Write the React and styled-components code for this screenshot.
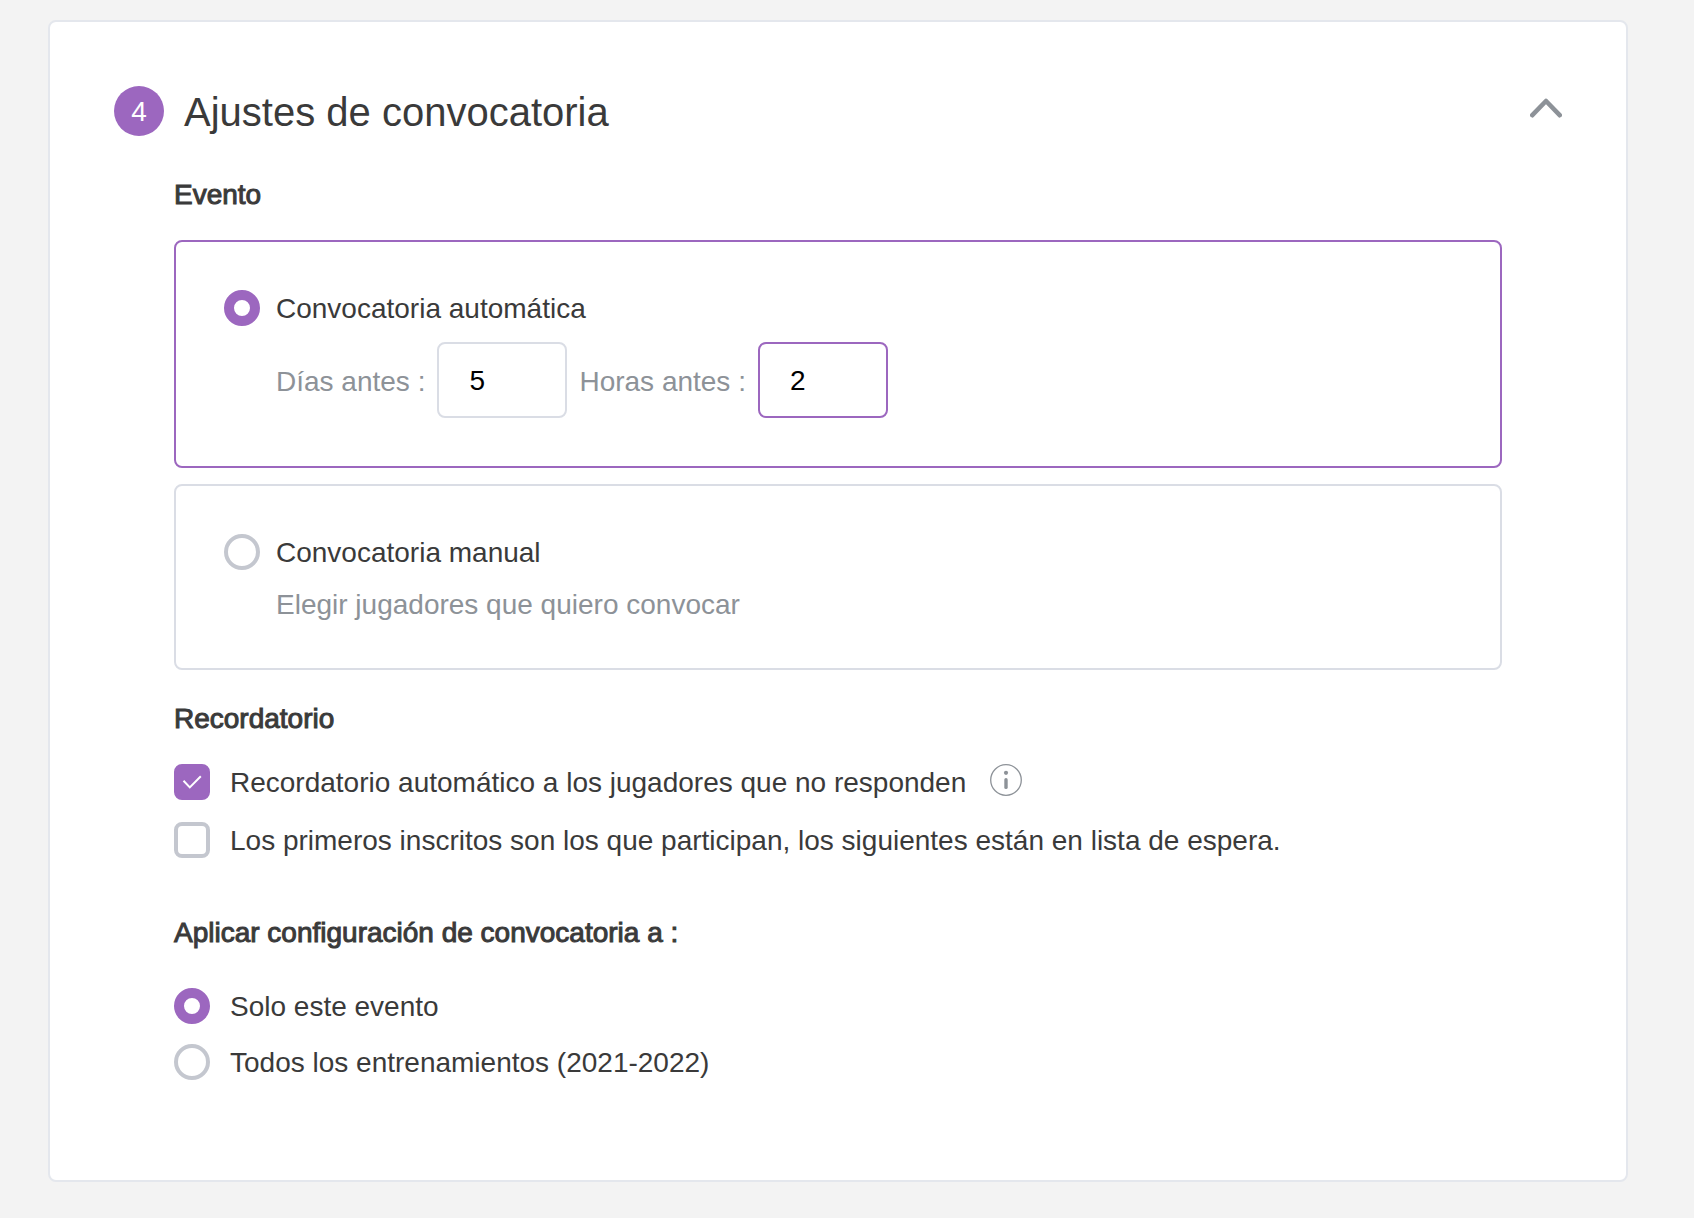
import React, { useState } from 'react';
import styled, { createGlobalStyle } from 'styled-components';

const GlobalStyle = createGlobalStyle`
  * {
    box-sizing: border-box;
  }

  body {
    margin: 0;
    background: #f3f3f3;
    color: #3a3a3a;
    font-family: 'Liberation Sans', Arial, sans-serif;
    font-size: 28px;
    line-height: 34px;
  }
`;

const Page = styled.main`
  padding: 20px 66px 36px 48px;
`;

const Card = styled.section`
  padding: 64px 64px 100px;
  background: #fff;
  border: 2px solid #e4e7ed;
  border-radius: 8px;
`;

const Header = styled.header`
  display: flex;
  align-items: center;
  gap: 20px;
`;

const StepNumber = styled.span`
  display: flex;
  align-items: center;
  justify-content: center;
  flex: none;
  width: 50px;
  height: 50px;
  padding-top: 2px;
  border-radius: 50%;
  background: #9c67bf;
  color: #fff;
`;

const Title = styled.h2`
  flex: 1;
  margin: 0;
  padding-top: 2px;
  font-size: 40px;
  line-height: 48px;
  font-weight: 400;
`;

const CollapseButton = styled.button`
  display: flex;
  padding: 0;
  border: none;
  background: none;
  color: #8d9298;
  cursor: pointer;
`;

const Content = styled.div`
  padding: 40px 60px 0;
`;

const Group = styled.fieldset`
  min-width: 0;
  margin: 0 0 ${props => props.$after || 0}px;
  padding: 0;
  border: none;
`;

const GroupTitle = styled.legend`
  padding: 2px 0 0;
  margin-bottom: ${props => props.$gap}px;
  -webkit-text-stroke: 1px currentColor;
`;

const Stack = styled.div`
  display: flex;
  flex-direction: column;
  gap: ${props => props.$gap}px;
`;

const OptionBox = styled.div`
  padding: 48px;
  border: 2px solid ${props => (props.$selected ? '#9c67bf' : '#dadde5')};
  border-radius: 8px;
`;

const Choice = styled.label`
  display: flex;
  align-items: center;
  gap: ${props => props.$gap || 20}px;
  cursor: pointer;
`;

const ChoiceText = styled.span`
  padding-top: 2px;
`;

const Radio = styled.input.attrs({ type: 'radio' })`
  appearance: none;
  flex: none;
  width: 36px;
  height: 36px;
  margin: 0;
  border: 4px solid #c4c7cf;
  border-radius: 50%;
  background: #fff;

  &:checked {
    border: 10px solid #9c67bf;
  }
`;

const CheckWrapper = styled.span`
  display: grid;
  flex: none;

  > * {
    grid-area: 1 / 1;
  }

  svg {
    pointer-events: none;
  }
`;

const Checkbox = styled.input.attrs({ type: 'checkbox' })`
  appearance: none;
  width: 36px;
  height: 36px;
  margin: 0;
  border: 4px solid #c4c7cf;
  border-radius: 8px;
  background: #fff;

  &:checked {
    border-color: #9c67bf;
    background: #9c67bf;
  }
`;

const OptionDetail = styled.div`
  display: flex;
  align-items: center;
  gap: 12px;
  padding: 16px 0 0 52px;
  line-height: 30px;
  color: #8d9298;
`;

const FieldLabel = styled.label`
  padding-top: 4px;
`;

const Hint = styled.p`
  margin: 0;
  padding-top: 4px;
`;

const NumberInput = styled.input`
  width: 130px;
  height: 76px;
  padding: 2px 30px 0;
  border: 2px solid #dadde5;
  border-radius: 8px;
  background: #fff;
  color: #000;
  font: inherit;
  outline: none;

  &:focus {
    border-color: #9c67bf;
  }
`;

const ReminderRow = styled.div`
  display: flex;
  align-items: center;
  gap: 24px;
`;

const InfoButton = styled.button`
  display: flex;
  align-self: flex-start;
  padding: 0;
  border: none;
  background: none;
  color: #8d9298;
  cursor: pointer;
`;

function CheckOption({ label, checked, onChange }) {
  return (
    <Choice>
      <CheckWrapper>
        <Checkbox checked={checked} onChange={onChange} />
        {checked && (
          <svg width="36" height="36" viewBox="0 0 36 36" fill="none" stroke="#fff" strokeWidth="2">
            <path d="M9.5 16.8 15.8 23.4 26.8 12.2" />
          </svg>
        )}
      </CheckWrapper>
      <ChoiceText>{label}</ChoiceText>
    </Choice>
  );
}

function App() {
  const [open, setOpen] = useState(true);
  const [mode, setMode] = useState('auto');
  const [days, setDays] = useState('5');
  const [hours, setHours] = useState('2');
  const [reminder, setReminder] = useState(true);
  const [waitList, setWaitList] = useState(false);
  const [scope, setScope] = useState('event');

  return (
    <Page>
      <GlobalStyle />
      <Card>
        <Header>
          <StepNumber>4</StepNumber>
          <Title>Ajustes de convocatoria</Title>
          <CollapseButton aria-label="Plegar" aria-expanded={open} onClick={() => setOpen(!open)}>
            <svg width="32" height="26" viewBox="0 0 32 26" fill="none" stroke="currentColor" strokeWidth="4.6" strokeLinecap="round" strokeLinejoin="round">
              <path d="M2.3 17.2 16 3 29.7 17.2" />
            </svg>
          </CollapseButton>
        </Header>

        {open && (
          <Content>
            <Group $after={30}>
              <GroupTitle $gap={28}>Evento</GroupTitle>
              <Stack $gap={16}>
                <OptionBox $selected={mode === 'auto'}>
                  <Choice $gap={16}>
                    <Radio name="mode" checked={mode === 'auto'} onChange={() => setMode('auto')} />
                    <ChoiceText>Convocatoria automática</ChoiceText>
                  </Choice>
                  <OptionDetail>
                    <FieldLabel htmlFor="days">Días antes :</FieldLabel>
                    <NumberInput id="days" value={days} onChange={e => setDays(e.target.value)} />
                    <FieldLabel htmlFor="hours">Horas antes :</FieldLabel>
                    <NumberInput id="hours" autoFocus value={hours} onChange={e => setHours(e.target.value)} />
                  </OptionDetail>
                </OptionBox>
                <OptionBox $selected={mode === 'manual'}>
                  <Choice $gap={16}>
                    <Radio name="mode" checked={mode === 'manual'} onChange={() => setMode('manual')} />
                    <ChoiceText>Convocatoria manual</ChoiceText>
                  </Choice>
                  <OptionDetail>
                    <Hint>Elegir jugadores que quiero convocar</Hint>
                  </OptionDetail>
                </OptionBox>
              </Stack>
            </Group>

            <Group $after={56}>
              <GroupTitle $gap={28}>Recordatorio</GroupTitle>
              <Stack $gap={22}>
                <ReminderRow>
                  <CheckOption
                    label="Recordatorio automático a los jugadores que no responden"
                    checked={reminder}
                    onChange={() => setReminder(!reminder)}
                  />
                  <InfoButton aria-label="Más información">
                    <svg width="32" height="32" viewBox="0 0 32 32" fill="none" stroke="currentColor">
                      <circle cx="16" cy="16" r="15.3" strokeWidth="1.3" />
                      <circle cx="16" cy="8.8" r="2.1" fill="currentColor" stroke="none" />
                      <path d="M16 15.8v7.6" strokeWidth="3.4" strokeLinecap="round" />
                    </svg>
                  </InfoButton>
                </ReminderRow>
                <CheckOption
                  label="Los primeros inscritos son los que participan, los siguientes están en lista de espera."
                  checked={waitList}
                  onChange={() => setWaitList(!waitList)}
                />
              </Stack>
            </Group>

            <Group>
              <GroupTitle $gap={38}>Aplicar configuración de convocatoria a :</GroupTitle>
              <Stack $gap={20}>
                <Choice>
                  <Radio name="scope" checked={scope === 'event'} onChange={() => setScope('event')} />
                  <ChoiceText>Solo este evento</ChoiceText>
                </Choice>
                <Choice>
                  <Radio name="scope" checked={scope === 'all'} onChange={() => setScope('all')} />
                  <ChoiceText>Todos los entrenamientos (2021-2022)</ChoiceText>
                </Choice>
              </Stack>
            </Group>
          </Content>
        )}
      </Card>
    </Page>
  );
}

export default App;
